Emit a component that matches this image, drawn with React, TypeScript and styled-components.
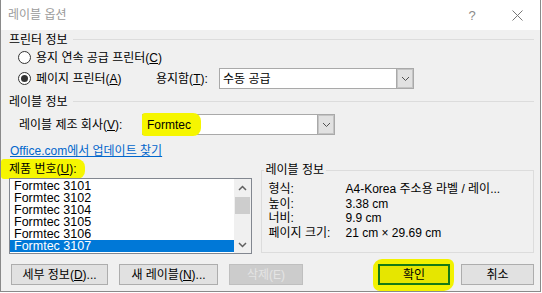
import React from "react";
import styled, { createGlobalStyle } from "styled-components";

const FONT = `"Liberation Sans", "Noto Sans CJK KR", sans-serif`;

const GlobalStyle = createGlobalStyle`
  html, body { margin: 0; padding: 0; background: #ffffff; }
  body { font-family: ${FONT}; font-size: 12px; color: #000; }
  * { box-sizing: border-box; }
`;

const Window = styled.div`
  width: 541px;
  height: 292px;
  border: 1px solid #8a8a8a;
  border-top: none;
  display: flex;
  flex-direction: column;
  background: #f0f0f0;
`;

const TitleBar = styled.div`
  height: 30px;
  flex: none;
  background: #fff;
  display: flex;
  align-items: center;
  padding-left: 7px;
`;

const Title = styled.span`
  color: #9a9a9a;
  line-height: 14px;
`;

const TitleButtons = styled.div`
  margin-left: auto;
  display: flex;
  gap: 7px;
`;

const TitleButton = styled.span<{ $w: number }>`
  width: ${(p) => p.$w}px;
  height: 30px;
  display: flex;
  align-items: center;
  justify-content: center;
  color: #8a8a8a;
  font-size: 13px;
`;

const Body = styled.div`
  flex: 1;
  display: flex;
  flex-direction: column;
  padding: 0 6px 0 8px;
`;

const SectionHeader = styled.div<{ $h: number }>`
  display: flex;
  align-items: center;
  height: ${(p) => p.$h}px;
  gap: 5px;
  line-height: 14px;
  &::after {
    content: "";
    flex: 1;
    height: 1px;
    background: #dcdcdc;
  }
`;

const Row = styled.div<{ $h: number; $indent?: number }>`
  display: flex;
  align-items: center;
  height: ${(p) => p.$h}px;
  padding-left: ${(p) => p.$indent ?? 0}px;
  line-height: 14px;
  flex: none;
`;

const RadioCircle = styled.span<{ $checked?: boolean }>`
  width: 13px;
  height: 13px;
  border-radius: 50%;
  border: 1px solid #333;
  background: #fff;
  margin-right: 5px;
  display: flex;
  align-items: center;
  justify-content: center;
  &::after {
    content: "";
    width: 7px;
    height: 7px;
    border-radius: 50%;
    background: ${(p) => (p.$checked ? "#333" : "transparent")};
  }
`;

const FixedLabel = styled.span<{ $w: number }>`
  width: ${(p) => p.$w}px;
  flex: none;
  white-space: nowrap;
`;

const Combo = styled.div<{ $w: number }>`
  width: ${(p) => p.$w}px;
  height: 21px;
  display: flex;
  border: 1px solid #a9a9a9;
  background: #fff;
`;

const ComboText = styled.span`
  flex: 1;
  display: flex;
  align-items: center;
  padding-left: 3px;
`;

const Marker = styled.span`
  display: flex;
  align-items: center;
  background: #f6f600;
  border-radius: 3px 8px 8px 3px;
`;

const ComboMarker = styled(Marker)`
  margin: -2px 0 -2px -4px;
  padding: 0 10px 0 5px;
  align-self: stretch;
`;

const DropButton = styled.span`
  width: 17px;
  flex: none;
  display: flex;
  align-items: center;
  justify-content: center;
  background: #e1e1e1;
  border-left: 1px solid #a9a9a9;
  box-shadow: inset 0 0 0 1px #c4c4c4;
`;

const Link = styled.a`
  display: flex;
  align-items: center;
  height: 16px;
  margin-top: 6px;
  margin-left: 1px;
  color: #0066cc;
  text-decoration: underline;
  line-height: 14px;
  flex: none;
`;

const Lower = styled.div`
  display: flex;
  gap: 9px;
  flex: none;
`;

const LeftColumn = styled.div`
  width: 243px;
  display: flex;
  flex-direction: column;
`;

const ProductLabel = styled.div`
  height: 19px;
  display: flex;
  line-height: 14px;
`;

const LabelMarker = styled(Marker)`
  margin: 0 0 -1px -8px;
  padding: 0 8px 0 8px;
`;

const ListBox = styled.div`
  height: 76px;
  border: 1px solid #828790;
  background: #fff;
  display: flex;
`;

const Items = styled.div`
  flex: 1;
  padding-top: 1px;
  overflow: hidden;
`;

const Item = styled.div<{ $selected?: boolean }>`
  height: 12px;
  line-height: 12px;
  padding-left: 4px;
  font-size: 12.5px;
  white-space: nowrap;
  background: ${(p) => (p.$selected ? "#0078d7" : "transparent")};
  color: ${(p) => (p.$selected ? "#fff" : "#000")};
`;

const ScrollBar = styled.div`
  width: 17px;
  flex: none;
  background: #f0f0f0;
  display: flex;
  flex-direction: column;
`;

const ScrollArrow = styled.span`
  height: 17px;
  display: flex;
  align-items: center;
  justify-content: center;
`;

const ScrollTrack = styled.div`
  flex: 1;
  padding: 1px 1px 0;
`;

const Thumb = styled.div`
  height: 17px;
  background: #cdcdcd;
`;

const InfoBox = styled.fieldset`
  margin: 4px 0 0;
  width: 274px;
  height: 90px;
  border: 1px solid #dcdcdc;
  padding: 5px 0 0 7px;
  min-width: 0;
`;

const Legend = styled.legend`
  padding: 0 2px;
  margin-left: -5px;
  line-height: 14px;
`;

const InfoRow = styled.div`
  display: flex;
  height: 14.5px;
  line-height: 14.5px;
  white-space: nowrap;
`;

const InfoKey = styled.span`
  width: 77px;
  flex: none;
`;

const ButtonRow = styled.div`
  display: flex;
  align-items: center;
  margin-top: 10px;
  height: 21px;
  flex: none;
`;

const Button = styled.button<{ $w: number; $gap?: number }>`
  width: ${(p) => p.$w}px;
  height: 21px;
  margin-left: ${(p) => p.$gap ?? 0}px;
  padding: 0;
  border: 1px solid #adadad;
  background: #e1e1e1;
  font-family: ${FONT};
  font-size: 12px;
  color: #000;
  line-height: 14px;
  &:disabled {
    background: #cccccc;
    border-color: #bfbfbf;
    color: #e4e4e4;
  }
`;

const OkHighlight = styled.span`
  display: flex;
  margin: -5px -4px -6px auto;
  padding: 5px 4px 6px 5px;
  background: #f2f200;
  border-radius: 9px 6px 10px 7px;
`;

const OkButton = styled(Button)`
  background: #e6e600;
  border: 2px solid #157a15;
`;

const Chevron = () => (
  <svg width="9" height="6" viewBox="0 0 9 6">
    <path d="M1 1 L4.5 4.5 L8 1" fill="none" stroke="#505050" strokeWidth={1} />
  </svg>
);

const ScrollChevron = ({ up }: { up?: boolean }) => (
  <svg width="9" height="6" viewBox="0 0 9 6">
    <path
      d={up ? "M1 5 L4.5 1.5 L8 5" : "M1 1 L4.5 4.5 L8 1"}
      fill="none"
      stroke="#606060"
      strokeWidth={1.5}
    />
  </svg>
);

const CloseIcon = () => (
  <svg width="11" height="11" viewBox="0 0 11 11">
    <path d="M0.5 0.5 L10.5 10.5 M10.5 0.5 L0.5 10.5" stroke="#777" strokeWidth="1" />
  </svg>
);

const items = ["3101", "3102", "3104", "3105", "3106", "3107"];

const info: [string, string][] = [
  ["형식:", "A4-Korea 주소용 라벨 / 레이..."],
  ["높이:", "3.38 cm"],
  ["너비:", "9.9 cm"],
  ["페이지 크기:", "21 cm × 29.69 cm"],
];

export default function App() {
  return (
    <>
      <GlobalStyle />
      <Window>
        <TitleBar>
          <Title>레이블 옵션</Title>
          <TitleButtons>
            <TitleButton $w={30}>?</TitleButton>
            <TitleButton $w={46}>
              <CloseIcon />
            </TitleButton>
          </TitleButtons>
        </TitleBar>
        <Body>
          <SectionHeader $h={19}>프린터 정보</SectionHeader>
          <Row $h={17} $indent={9}>
            <RadioCircle />
            용지 연속 공급 프린터(<u>C</u>)
          </Row>
          <Row $h={25} $indent={9}>
            <RadioCircle $checked />
            <FixedLabel $w={120}>
              페이지 프린터(<u>A</u>)
            </FixedLabel>
            <FixedLabel $w={63}>
              용지함(<u>T</u>):
            </FixedLabel>
            <Combo $w={195}>
              <ComboText>수동 공급</ComboText>
              <DropButton>
                <Chevron />
              </DropButton>
            </Combo>
          </Row>
          <SectionHeader $h={21}>레이블 정보</SectionHeader>
          <Row $h={25} $indent={10}>
            <FixedLabel $w={123}>
              레이블 제조 회사(<u>V</u>):
            </FixedLabel>
            <Combo $w={193}>
              <ComboText>
                <ComboMarker>Formtec</ComboMarker>
              </ComboText>
              <DropButton>
                <Chevron />
              </DropButton>
            </Combo>
          </Row>
          <Link>Office.com에서 업데이트 찾기</Link>
          <Lower>
            <LeftColumn>
              <ProductLabel>
                <LabelMarker>
                  제품 번호(<u>U</u>):
                </LabelMarker>
              </ProductLabel>
              <ListBox>
                <Items>
                  {items.map((n) => (
                    <Item key={n} $selected={n === "3107"}>
                      Formtec {n}
                    </Item>
                  ))}
                </Items>
                <ScrollBar>
                  <ScrollArrow>
                    <ScrollChevron up />
                  </ScrollArrow>
                  <ScrollTrack>
                    <Thumb />
                  </ScrollTrack>
                  <ScrollArrow>
                    <ScrollChevron />
                  </ScrollArrow>
                </ScrollBar>
              </ListBox>
            </LeftColumn>
            <InfoBox>
              <Legend>레이블 정보</Legend>
              {info.map(([k, v]) => (
                <InfoRow key={k}>
                  <InfoKey>{k}</InfoKey>
                  <span>{v}</span>
                </InfoRow>
              ))}
            </InfoBox>
          </Lower>
          <ButtonRow>
            <Button $w={97} $gap={2}>
              세부 정보(<u>D</u>)...
            </Button>
            <Button $w={99} $gap={11}>
              새 레이블(<u>N</u>)...
            </Button>
            <Button $w={74} $gap={11} disabled>
              삭제(E)
            </Button>
            <OkHighlight>
              <OkButton $w={72}>확인</OkButton>
            </OkHighlight>
            <Button $w={73} $gap={11}>
              취소
            </Button>
          </ButtonRow>
        </Body>
      </Window>
    </>
  );
}
